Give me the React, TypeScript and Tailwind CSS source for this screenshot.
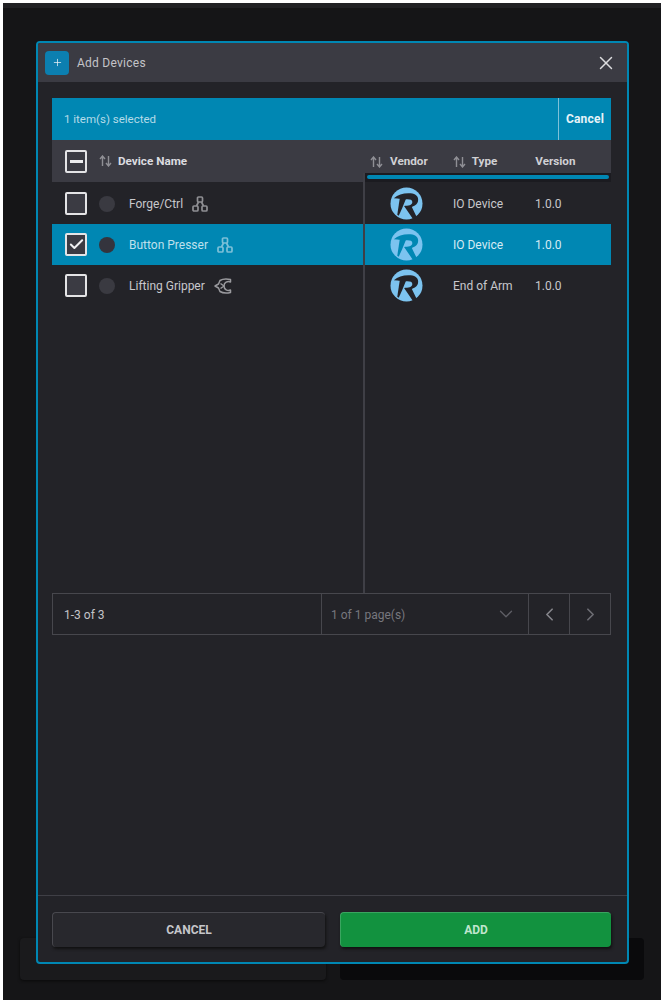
import { ChevronDown, ChevronLeft, ChevronRight, Check, Plus, X } from "lucide-react";

const devices = [
  { name: "Forge/Ctrl", icon: "network", type: "IO Device", version: "1.0.0", selected: false },
  { name: "Button Presser", icon: "network", type: "IO Device", version: "1.0.0", selected: true },
  { name: "Lifting Gripper", icon: "gripper", type: "End of Arm", version: "1.0.0", selected: false },
];

function SortIcon() {
  return (
    <svg width="13" height="12" viewBox="0 0 13 12" fill="none" stroke="#8f8f95" strokeWidth="1.4" className="shrink-0">
      <path d="M3.5 11V1.5M1 4l2.500-3L6 4" />
      <path d="M9.500 1v9.500M7 8l2.500 3L12 8" />
    </svg>
  );
}

function NetworkIcon({ color }: { color: string }) {
  return (
    <svg width="16" height="16" viewBox="0 0 16 16" fill="none" stroke={color} strokeWidth="1.7">
      <rect x="5.500" y="1" width="5" height="5" rx="1" />
      <rect x="1" y="10" width="5" height="5" rx="1" />
      <rect x="10" y="10" width="5" height="5" rx="1" />
      <path d="M6.500 6L4.500 10M9.500 6l2 4" />
    </svg>
  );
}

function GripperIcon() {
  return (
    <svg width="18" height="18" viewBox="0 0 18 18" fill="none" stroke="#9a9a9e" strokeWidth="1.5" strokeLinejoin="round">
      <path d="M1 9L4.500 7 6 3.500Q10 1 16.500 2.500V5A4.500 4.500 0 0 0 10 9 4.500 4.500 0 0 0 16.500 13V15.500Q10 17 6 14.500L4.500 11z" />
      <path d="M6.500 6.500L10 9 6.500 11.500" />
    </svg>
  );
}

function VendorLogo({ cut }: { cut: string }) {
  return (
    <svg width="33" height="33" viewBox="0 0 34 34">
      <circle cx="17" cy="17" r="16.500" fill="#7cc3ef" />
      {/* top sweep, bowl and leg of the R */}
      <path
        fill={cut}
        d="M4 11.500C8 8 13 6.500 19 6.500c6 0 10 2 10 6.500 0 4-2.500 6.500-6.500 7.500L27.500 31 24 33.500 14.500 19.500c4 0 8.500-.5 8.500-4 0-2.300-2-3-5-3-5 0-9-.5-14 -1z"
      />
      {/* stem */}
      <path fill={cut} d="M10 12h6.500L12.500 22 9 29.500 7.500 28.500z" />
    </svg>
  );
}

function RowBox({ selected }: { selected: boolean }) {
  return (
    <div className="w-[22px] h-[23px] shrink-0 rounded-[2px] border-2 border-[#e4e4e6] bg-[#3b3b43] flex items-center justify-center">
      {selected && <Check size={17} strokeWidth={2.8} color="#f0f0f2" />}
    </div>
  );
}

export default function App() {
  return (
    <div className="relative w-[664px] h-[1003px] bg-white overflow-hidden font-['Roboto',sans-serif]">
      {/* page behind the dialog */}
      <div className="ml-[3px] mt-[3px] w-[658px] h-[997px] bg-[#151517] border-t-[5px] border-[#212124] flex items-end gap-[14px] pl-[17px] pb-[20px]">
        <div className="w-[306px] h-[42px] rounded-[4px] bg-[#1a1a1c] shadow-[0_1px_3px_#0a0a0a]" />
        <div className="w-[304px] h-[42px] rounded-[4px] bg-[#0a0a0c]" />
      </div>

      <div className="absolute left-[36px] top-[41px] w-[593px] h-[923px] rounded-[4px] border-2 border-[#0087b3] bg-[#232328] flex flex-col">
        <header className="h-[39px] shrink-0 bg-[#3b3b43] rounded-t-[2px] flex items-center pl-[7px] pr-[12px]">
          <div className="w-[24px] h-[24px] rounded-[4px] bg-[#0c7fb0] flex items-center justify-center">
            <Plus size={11} color="#eef4f8" strokeWidth={1.6} />
          </div>
          <span className="ml-[8px] pt-[1px] text-[12px] tracking-[0.25px] text-[#c4c4c8]">Add Devices</span>
          <X size={22} strokeWidth={1.6} color="#dcdcde" className="ml-auto mr-[-2px]" />
        </header>

        <div className="flex-1 min-h-0 flex flex-col pt-[16px] pl-[14px] pr-[16px]">
          <div className="h-[42px] shrink-0 bg-[#0087b3] flex items-center justify-between">
            <span className="pl-[12px] pt-[1px] text-[11.500px] text-[#b5dbe8]">1 item(s) selected</span>
            <span className="h-full w-[53px] border-l border-[#7fc1d8] flex items-center justify-center text-[12px] font-bold tracking-[0.2px] text-[#e6f3f8]">
              Cancel
            </span>
          </div>

          <div className="h-[453px] shrink-0 grid grid-cols-[311px_2px_1fr] grid-rows-[42px_1fr]">
            <div className="bg-[#3b3b43] flex items-center pl-[13px]">
              <div className="w-[22px] h-[23px] rounded-[2px] border-2 border-[#e4e4e6] flex items-center justify-center">
                <div className="w-[13px] h-[3px] bg-[#ececee]" />
              </div>
              <span className="ml-[12px]"><SortIcon /></span>
              <span className="ml-[6px] pt-[1px] text-[11.700px] font-bold text-[#dcdce0]">Device Name</span>
            </div>
            <div className="row-span-2 flex flex-col">
              <div className="h-[33px] bg-[#3b3b43]" />
              <div className="flex-1 bg-[#3f3f46]" />
            </div>
            <div className="relative bg-[#3b3b43] flex items-center pt-[1px] text-[11.700px] font-bold text-[#d0d0d4]">
              <span className="ml-[5px]"><SortIcon /></span>
              <span className="ml-[7px]">Vendor</span>
              <span className="ml-[25px]"><SortIcon /></span>
              <span className="ml-[6px]">Type</span>
              <span className="ml-[38px]">Version</span>
              {/* scrollbar laid over the header's lower edge */}
              <div className="absolute left-0 right-0 bottom-0 h-[9px] bg-[#1b1b20] px-[2px] pt-[2px]">
                <div className="h-[4px] rounded-full bg-[#0087b3]" />
              </div>
            </div>

            <div className="col-start-1 pt-[1px]">
              {devices.map((d) => (
                <div key={d.name} className={`h-[41px] flex items-center pl-[13px] ${d.selected ? "bg-[#0087b3]" : ""}`}>
                  <RowBox selected={d.selected} />
                  <div className={`ml-[12px] w-[16px] h-[16px] rounded-full ${d.selected ? "bg-[#34343d]" : "bg-[#3a3a41]"}`} />
                  <span className={`ml-[14px] text-[12px] ${d.selected ? "text-[#bfe0ec]" : "text-[#c8c8cc]"}`}>{d.name}</span>
                  <span className="ml-[9px]">
                    {d.icon === "network" ? <NetworkIcon color={d.selected ? "#7cc0d8" : "#8f8f93"} /> : <GripperIcon />}
                  </span>
                </div>
              ))}
            </div>
            <div className="col-start-3 pt-[1px]">
              {devices.map((d) => (
                <div key={d.name} className={`h-[41px] flex items-center text-[12px] ${d.selected ? "bg-[#0087b3] text-[#d6ebf3]" : "text-[#c8c8cc]"}`}>
                  <div className="w-[88px] pl-[25px] shrink-0"><VendorLogo cut={d.selected ? "#0087b3" : "#232328"} /></div>
                  <span className="w-[82px] shrink-0">{d.type}</span>
                  <span>{d.version}</span>
                </div>
              ))}
            </div>
          </div>

          <div className="h-[42px] shrink-0 border border-[#47474d] flex text-[12px]">
            <div className="w-[268px] flex items-center pl-[11px] pt-[1px] text-[#c4c4c8]">1-3 of 3</div>
            <div className="w-[207px] border-l border-[#47474d] flex items-center justify-between pl-[9px] pr-[11px] text-[#77777e]">
              <span className="pt-[1px]">1 of 1 page(s)</span>
              <ChevronDown size={22} strokeWidth={1.4} color="#5f5f66" />
            </div>
            <div className="w-[41px] border-l border-[#47474d] flex items-center justify-center">
              <ChevronLeft size={21} strokeWidth={1.9} color="#85858b" />
            </div>
            <div className="flex-1 border-l border-[#47474d] flex items-center justify-center">
              <ChevronRight size={21} strokeWidth={1.9} color="#6d6d74" />
            </div>
          </div>
        </div>

        <footer className="h-[67px] shrink-0 border-t border-[#3f3f46] flex gap-[15px] pt-[16px] pl-[14px]">
          <button className="w-[273px] h-[35px] rounded-[4px] bg-[#28282d] border-t border-l border-[#48484e] shadow-[1px_2px_3px_#111] text-[12px] font-bold text-[#c6c6ca]">
            CANCEL
          </button>
          <button className="w-[271px] h-[35px] rounded-[4px] bg-[#12923f] border-t border-l border-[#3aa560] shadow-[1px_2px_3px_#111] text-[12px] font-bold text-[#bfe6cd]">
            ADD
          </button>
        </footer>
      </div>
    </div>
  );
}
